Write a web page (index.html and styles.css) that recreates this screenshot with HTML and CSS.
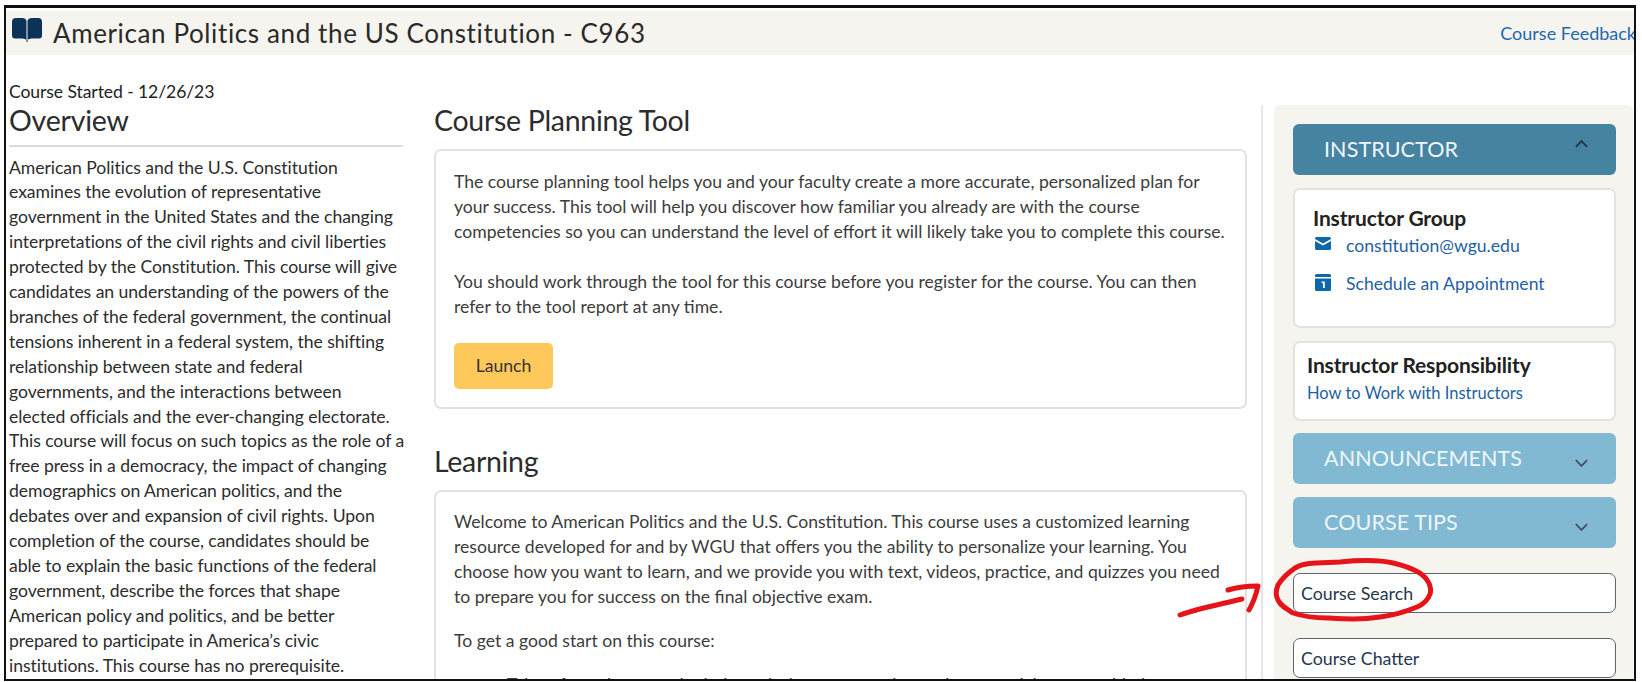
FILE: index.html
```html
<!DOCTYPE html>
<html lang="en">
<head>
<meta charset="utf-8">
<title>American Politics and the US Constitution - C963</title>
<link rel="stylesheet" href="styles.css">
</head>
<body>
<div class="frame">
  <header class="topbar">
    <div class="topbar-title">
      <svg class="book" viewBox="0 0 30 24"><path d="M0 4a4 4 0 0 1 4-4h6c2.500 0 4.200 1 4.500 3v19c-1.200-1-3-1.500-5-1.500H3a3 3 0 0 1-3-3zM30 4a4 4 0 0 0-4-4h-6c-2.500 0-4.200 1-4.500 3v19c1.200-1 3-1.500 5-1.500h6.500a3 3 0 0 0 3-3zM14.500 22h1v2h-1z"/></svg>
      <h1>American Politics and the US Constitution - C963</h1>
    </div>
    <a class="feedback" href="#">Course Feedback</a>
  </header>
  <div class="columns">
    <aside class="overview">
      <div class="started">Course Started - 12/26/23</div>
      <h2 class="overview-title">Overview</h2>
      <p>American Politics and the U.S. Constitution examines the evolution of representative government in the United States and the changing interpretations of the civil rights and civil liberties protected by the Constitution. This course will give candidates an understanding of the powers of the branches of the federal government, the continual tensions inherent in a federal system, the shifting relationship between state and federal governments, and the interactions between<br>elected officials and the ever-changing electorate. This course will focus on such topics as the role of a free press in a democracy, the impact of changing demographics on American politics, and the debates over and expansion of civil rights. Upon completion of the course, candidates should be able to explain the basic functions of the federal government, describe the forces that shape American policy and politics, and be better prepared to participate in America’s civic institutions. This course has no prerequisite.</p>
    </aside>
    <main class="content">
      <h2>Course Planning Tool</h2>
      <section class="card planning">
        <p>The course planning tool helps you and your faculty create a more accurate, personalized plan for your success. This tool will help you discover how familiar you already are with the course competencies so you can understand the level of effort it will likely take you to complete this course.</p>
        <p>You should work through the tool for this course before you register for the course. You can then refer to the tool report at any time.</p>
        <button class="launch">Launch</button>
      </section>
      <h2 class="learning-title">Learning</h2>
      <section class="card learning">
        <p>Welcome to American Politics and the U.S. Constitution. This course uses a customized learning resource developed for and by WGU that offers you the ability to personalize your learning. You choose how you want to learn, and we provide you with text, videos, practice, and quizzes you need to prepare you for success on the final objective exam.</p>
        <p>To get a good start on this course:</p>
        <ul><li>Take a few minutes to look through the course and see what materials are provided.</li></ul>
      </section>
    </main>
    <div class="divider"></div>
    <aside class="sidebar">
      <div class="acc acc-open"><span>INSTRUCTOR</span>
        <svg class="chev up" viewBox="0 0 16 10"><path d="M2 8l6-6 6 6"/></svg></div>
      <div class="panel group">
        <h3>Instructor Group</h3>
        <div class="contact">
          <svg class="ico" viewBox="0 0 16 13"><path d="M1.500 0h13A1.500 1.500 0 0 1 16 1.500V2L8 6.500 0 2v-.5A1.500 1.500 0 0 1 1.500 0zM0 4l8 4.500L16 4v7.500a1.500 1.500 0 0 1-1.500 1.500h-13A1.500 1.500 0 0 1 0 11.500z"/></svg>
          <a href="#">constitution@wgu.edu</a>
        </div>
        <div class="contact">
          <svg class="ico cal" viewBox="0 0 16 17"><path fill-rule="evenodd" d="M1.500 0h13A1.500 1.500 0 0 1 16 1.500V3H0V1.500A1.500 1.500 0 0 1 1.500 0zM0 4.500h16v11a1.500 1.500 0 0 1-1.500 1.500h-13A1.500 1.500 0 0 1 0 15.500zM6.500 7.500V9H8v5h1.800V7.500z"/></svg>
          <a href="#">Schedule an Appointment</a>
        </div>
      </div>
      <div class="panel resp">
        <h3>Instructor Responsibility</h3>
        <a href="#">How to Work with Instructors</a>
      </div>
      <div class="acc"><span>ANNOUNCEMENTS</span>
        <svg class="chev" viewBox="0 0 16 10"><path d="M2 2l6 6 6-6"/></svg></div>
      <div class="acc"><span>COURSE TIPS</span>
        <svg class="chev" viewBox="0 0 16 10"><path d="M2 2l6 6 6-6"/></svg></div>
      <div class="field search">Course Search</div>
      <div class="field">Course Chatter</div>
    </aside>
  </div>
  <svg class="ink" viewBox="0 0 1642 682">
    <path d="M1180 615C1200 608 1222 604 1242 599M1228 590C1238 587 1248 586 1258 586C1256 595 1253 603 1249 610M1295 568C1305 562 1320 563 1340 562C1360 560 1380 560 1393 563C1410 567 1422 572 1427 580C1431 585 1431 592 1430 594C1428 600 1424 604 1417 607C1405 612 1395 615 1380 617C1360 620 1345 619 1327 618C1315 618 1302 616 1293 613C1285 608 1280 605 1278 600C1275 595 1276 590 1278 585C1282 578 1288 573 1295 568"/>
  </svg>
</div>
</body>
</html>
```
FILE: styles.css
```css
* { box-sizing: border-box; }
html, body { margin: 0; height: 100%; background: #fff; overflow: hidden; }
body { padding: 5px 5px 1px 4px; font-family: Lato, "Liberation Sans", sans-serif; color: #2c2c2c; }
a { color: #1f5fa3; text-decoration: none; }

.frame { position: relative; height: 676px; width: 1632px; border: 2px solid #111; border-top-width: 3px; overflow: hidden; display: flex; flex-direction: column; background: #fff; }

.topbar { flex: none; height: 44px; margin-top: 3px; background: #f5f4ef; display: flex; align-items: center; justify-content: space-between; padding-left: 6px; }
.topbar-title { display: flex; align-items: center; gap: 11px; }
.book { width: 30px; height: 24px; fill: #0c3257; margin-top: -7px; }
h1 { margin: 0; font-size: 26px; font-weight: 400; letter-spacing: .62px; color: #2a2a2a; }
.feedback { font-size: 18px; color: #1f69ad; white-space: nowrap; margin-right: -2px; }

.columns { flex: 1; min-height: 0; display: flex; align-items: flex-start; padding-left: 3px; }

.overview { flex: none; width: 394px; padding-top: 27px; }
.started { font-size: 17.600px; line-height: 20px; color: #222; letter-spacing: -.1px; }
.overview-title { margin: 0; padding-bottom: 7px; border-bottom: 2px solid #dcdcdc; font-size: 28.500px; font-weight: 400; line-height: 36px; letter-spacing: -.2px; }
.overview p { margin: 8.500px -2px 0 0; font-size: 17.600px; letter-spacing: -.05px; line-height: 24.900px; color: #2c2c2c; }

.content { flex: none; width: 813px; margin-left: 31px; padding-top: 47px; }
.content h2 { margin: 0; font-size: 28.500px; font-weight: 400; line-height: 36px; letter-spacing: -.3px; }
.card { margin-top: 11px; border: 2px solid #e2e2e2; border-radius: 7px; background: #fff; padding: 19px 18px; font-size: 17.600px; line-height: 24.900px; color: #3c3c3c; }
.card p { margin: 0 0 25px; }
.planning { height: 260px; }
.launch { display: block; margin-top: -2px; width: 99px; height: 46px; border: 0; border-radius: 5px; background: #fec85a; color: #333; font: 17.600px Lato, "Liberation Sans", sans-serif; }
.content .learning-title { margin-top: 34px; }
.learning { margin-top: 11px; padding-top: 18px; }
.learning p { margin-bottom: 19px; }
.learning ul { margin: 0; padding-left: 53px; }

.divider { flex: none; align-self: stretch; width: 2px; margin: 50px 0 0 14px; background: #e6e6e6; }

.sidebar { flex: none; width: 359px; height: 640px; margin: 50px 0 0 11px; padding: 19px 0 0 19px; background: #f5f4ef; border-radius: 6px 6px 0 0; }
.acc { position: relative; width: 323px; height: 51px; margin-bottom: 13px; padding-left: 31px; border-radius: 6px; background: #81b9d3; color: #eef6f9; font-size: 21.500px; display: flex; align-items: center; }
.acc-open { background: #4583a0; }
.acc span { margin-top: -2px; letter-spacing: .1px; }
.chev { position: absolute; right: 27px; top: 25px; width: 15px; height: 10px; fill: none; stroke: #46525c; stroke-width: 2px; }
.chev.up { top: 15px; stroke: #1f3642; }

.panel { width: 323px; background: #fff; border: 2px solid #e3e3e3; border-radius: 7px; }
.panel h3 { margin: 0; font-size: 21px; font-weight: 700; line-height: 26px; color: #222; letter-spacing: -.15px; }
.group { height: 140px; padding: 15px 18px 0 18px; }
.contact { display: flex; align-items: flex-start; gap: 15px; margin-top: 3px; padding-left: 2px; height: 35px; font-size: 17.600px; line-height: 24px; }
.ico { flex: none; width: 16px; height: 13px; fill: #0e67a8; margin-top: 3px; }
.ico.cal { height: 17px; margin-top: 2px; }
.resp { height: 80px; margin: 13px 0 12px; padding: 9px 12px 0; }
.resp a { display: block; margin-top: 3px; font-size: 16.500px; line-height: 24px; }

.field { width: 323px; height: 40px; margin: 0 0 25px; padding: 0 0 1px 7px; display: flex; align-items: center; border: 1.500px solid #5c6670; border-radius: 7px; background: #fff; font-size: 17.800px; color: #25374d; }
.search { margin-top: 25px; }

.ink { position: absolute; left: -6px; top: -8px; width: 1642px; height: 682px; pointer-events: none; fill: none; stroke: #e5141a; stroke-width: 5px; stroke-linecap: round; stroke-linejoin: round; }
```
